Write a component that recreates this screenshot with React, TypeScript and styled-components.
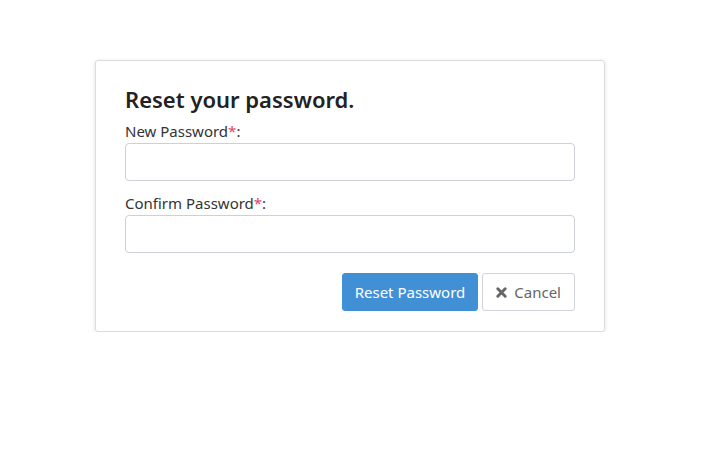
import React from "react";
import styled, { createGlobalStyle } from "styled-components";

const GlobalStyle = createGlobalStyle`
  html, body {
    margin: 0;
    padding: 0;
    background: #fff;
    font-family: "Noto Sans", "Open Sans", sans-serif;
    color: #333;
  }
  * { box-sizing: border-box; }
`;

const Page = styled.div`
  width: 706px;
  padding: 60px 0 0 95px;
`;

const Card = styled.form`
  width: 510px;
  border: 1px solid #dcdcdc;
  border-radius: 3px;
  box-shadow: 0 1px 4px rgba(0, 0, 0, 0.12);
  padding: 23px 29px 20px 29px;
`;

const Title = styled.h2`
  margin: 0 0 6px;
  font-size: 22px;
  font-weight: 600;
  color: #222;
  line-height: 30px;
`;

const Field = styled.div`
  display: flex;
  flex-direction: column;
  margin-bottom: 11px;
`;

const Label = styled.label`
  font-size: 15px;
  line-height: 22px;
  color: #333;
  margin-bottom: 1px;
`;

const Star = styled.span`
  color: #e0436b;
`;

const Input = styled.input`
  height: 38px;
  width: 100%;
  border: 1px solid #cdd0d6;
  border-radius: 4px;
  padding: 6px 12px;
  font-size: 15px;
  font-family: inherit;
  outline: none;
`;

const Actions = styled.div`
  display: flex;
  justify-content: flex-end;
  gap: 4px;
  margin-top: 20px;
`;

const Button = styled.button<{ $primary?: boolean }>`
  height: 38px;
  padding: 0 ${(p) => (p.$primary ? "12px" : "13px")};
  border-radius: 3px;
  font-family: inherit;
  font-size: 15px;
  display: flex;
  align-items: center;
  gap: 7px;
  cursor: pointer;
  border: 1px solid ${(p) => (p.$primary ? "#4190d6" : "#cfd3d9")};
  background: ${(p) => (p.$primary ? "#4190d6" : "#fff")};
  color: ${(p) => (p.$primary ? "#fff" : "#666")};
`;

const XIcon = () => (
  <svg width="11" height="11" viewBox="0 0 12 12">
    <path
      d="M2 2 L10 10 M10 2 L2 10"
      stroke="#666"
      strokeWidth="3.2"
      strokeLinecap="round"
    />
  </svg>
);

export default function App() {
  return (
    <Page>
      <GlobalStyle />
      <Card onSubmit={(e) => e.preventDefault()}>
        <Title>Reset your password.</Title>
        <Field>
          <Label>
            New Password<Star>*</Star>:
          </Label>
          <Input type="password" />
        </Field>
        <Field>
          <Label>
            Confirm Password<Star>*</Star>:
          </Label>
          <Input type="password" />
        </Field>
        <Actions>
          <Button $primary type="submit">Reset Password</Button>
          <Button type="button">
            <XIcon />
            Cancel
          </Button>
        </Actions>
      </Card>
    </Page>
  );
}
